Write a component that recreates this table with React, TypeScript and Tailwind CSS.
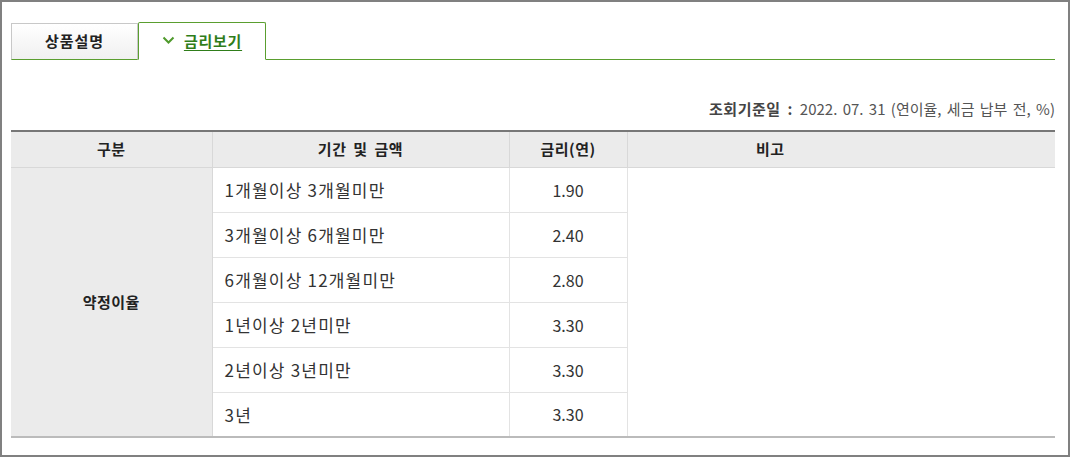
import React from "react";

const rows = [
  ["1개월이상 3개월미만", "1.90"],
  ["3개월이상 6개월미만", "2.40"],
  ["6개월이상 12개월미만", "2.80"],
  ["1년이상 2년미만", "3.30"],
  ["2년이상 3년미만", "3.30"],
  ["3년", "3.30"],
];

export default function App() {
  return (
    <div
      className="w-[1070px] h-[457px] border-2 border-[#808080] bg-white box-border pl-[9px] pr-[13px] pt-[20px]"
      style={{ fontFamily: '"Noto Sans CJK KR", "Noto Sans", sans-serif' }}
    >
      <div className="flex items-end h-[38px] border-b border-[#5a9e2f]">
        <div className="w-[127px] h-[37px] mb-[-1px] border border-[#c8c8c8] border-b-[#5a9e2f] bg-gradient-to-b from-white to-[#f0f0f0] flex items-center justify-center text-[15px] tracking-[1px] font-bold text-[#222]">
          상품설명
        </div>
        <div className="w-[128px] h-[38px] mb-[-1px] border border-[#5a9e2f] border-b-white bg-white flex items-center justify-center gap-[9px] text-[15px] tracking-[0.75px] font-bold text-[#2f7d1a] rounded-t-[2px]">
          <svg width="13" height="9" viewBox="0 0 13 9" className="mt-[-2px]">
            <path d="M1.5 1.5 L6.5 6.5 L11.5 1.5" fill="none" stroke="#4f9a2c" strokeWidth="2" />
          </svg>
          <span className="underline underline-offset-[3px]">금리보기</span>
        </div>
      </div>
      <div className="h-[70px] flex items-end justify-end pb-[10px] text-[15px] text-[#555] [word-spacing:2px]">
        <span className="font-bold text-[#444] mr-[7px] [word-spacing:3px] tracking-[0.5px]">조회기준일 :</span>
        <span>2022. 07. 31 (연이율, 세금 납부 전, %)</span>
      </div>
      <table className="w-[1044px] border-collapse border-t-2 border-t-[#777] border-b-2 border-b-[#bbb] table-fixed">
        <colgroup>
          <col className="w-[201px]" />
          <col className="w-[297px]" />
          <col className="w-[118px]" />
          <col className="w-[428px]" />
        </colgroup>
        <thead>
          <tr className="h-[36px] bg-[#ebebeb] text-[15px] tracking-[0.5px] [word-spacing:3px] font-bold text-[#222]">
            <th className="border-b border-[#d8d8d8] border-r">구분</th>
            <th className="border-b border-[#d8d8d8] border-r">기간 및 금액</th>
            <th className="border-b border-[#d8d8d8] border-r">금리(연)</th>
            <th className="border-b border-[#d8d8d8] pr-[142px]">비고</th>
          </tr>
        </thead>
        <tbody>
          {rows.map((r, i) => (
            <tr key={i} className="h-[45px] text-[#333]">
              {i === 0 && (
                <td rowSpan={6} className="bg-[#ebebeb] text-center text-[15px] tracking-[0.5px] font-bold text-[#222] border-r border-[#d8d8d8]">
                  약정이율
                </td>
              )}
              <td className={`pl-[12px] text-[17px] tracking-[1.2px] border-r border-[#e3e3e3] ${i < 5 ? "border-b" : ""}`}>{r[0]}</td>
              <td className={`text-center text-[16px] border-r border-[#e3e3e3] ${i < 5 ? "border-b" : ""}`}>{r[1]}</td>
              {i === 0 && <td rowSpan={6}></td>}
            </tr>
          ))}
        </tbody>
      </table>
    </div>
  );
}
